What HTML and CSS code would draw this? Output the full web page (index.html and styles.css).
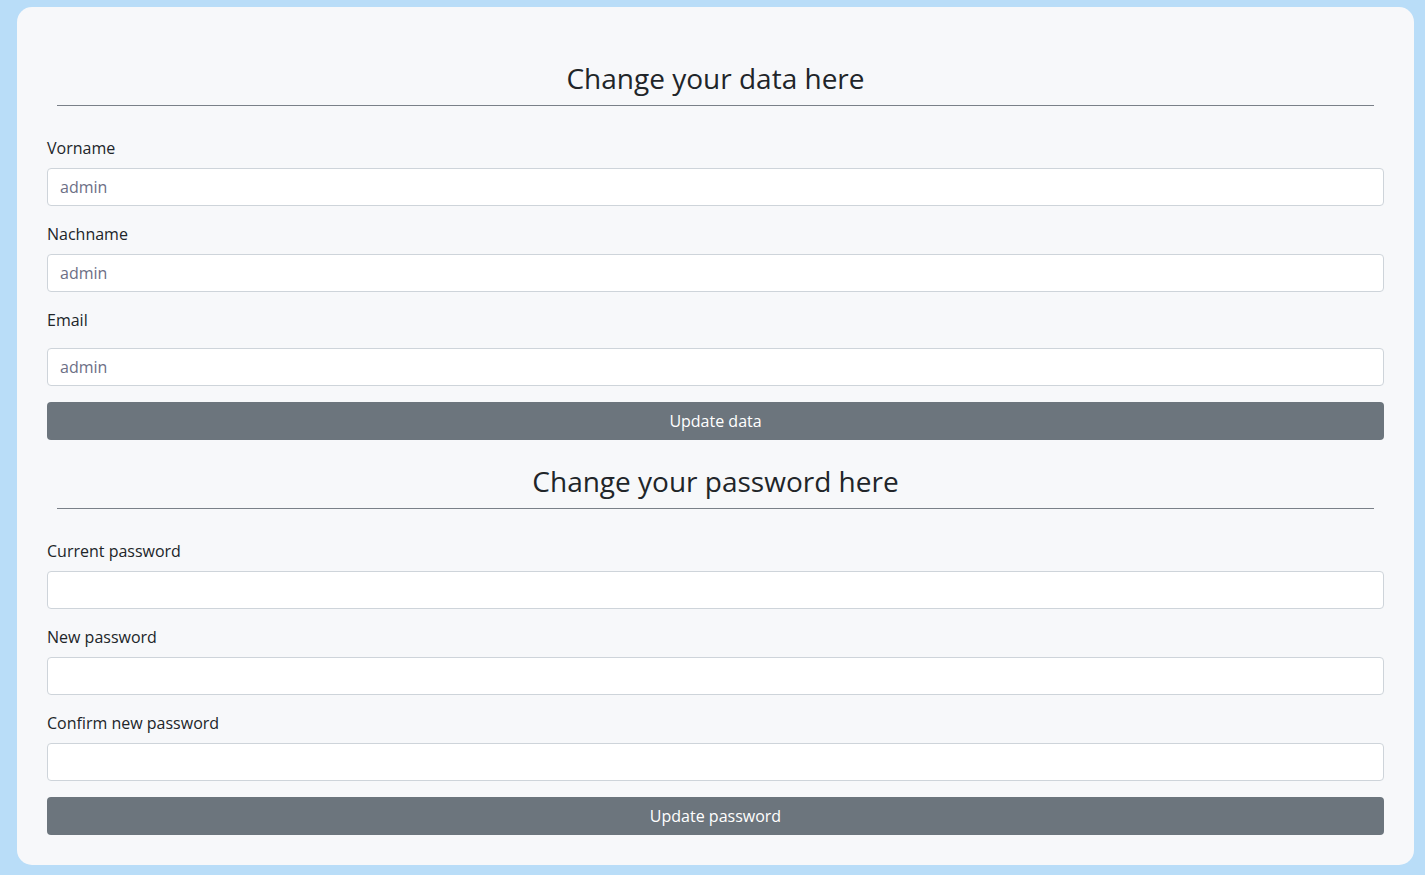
FILE: index.html
```html
<!DOCTYPE html>
<html lang="de">
<head>
<meta charset="utf-8">
<title>Profile</title>
<link rel="stylesheet" href="styles.css">
</head>
<body>
<main class="card">
  <form class="section">
    <h3 class="title">Change your data here</h3>
    <hr class="rule">
    <div class="group">
      <label class="label" for="vorname">Vorname</label>
      <input class="input" id="vorname" type="text" placeholder="admin">
    </div>
    <div class="group">
      <label class="label" for="nachname">Nachname</label>
      <input class="input" id="nachname" type="text" placeholder="admin">
    </div>
    <div class="group">
      <label class="label label-wide" for="email">Email</label>
      <input class="input" id="email" type="text" placeholder="admin">
    </div>
    <button class="btn" type="button">Update data</button>
  </form>
  <form class="section">
    <h3 class="title">Change your password here</h3>
    <hr class="rule">
    <div class="group">
      <label class="label" for="cur">Current password</label>
      <input class="input" id="cur" type="password">
    </div>
    <div class="group">
      <label class="label" for="new">New password</label>
      <input class="input" id="new" type="password">
    </div>
    <div class="group">
      <label class="label" for="conf">Confirm new password</label>
      <input class="input" id="conf" type="password">
    </div>
    <button class="btn" type="button">Update password</button>
  </form>
</main>
</body>
</html>
```

FILE: styles.css
```css
* { box-sizing: border-box; }
html, body { margin: 0; padding: 0; }
body {
  background: #b9ddf8;
  font-family: "Open Sans", "Liberation Sans", sans-serif;
  color: #212529;
  font-size: 16px;
  line-height: 1.5;
  padding: 7px 11px 10px 17px;
  min-height: 875px;
}
.card {
  background: #f7f8fa;
  border-radius: 15px;
  padding: 0 30px 30px;
  width: 1397px;
}
.section { display: flex; flex-direction: column; }
.title {
  margin: 54px 0 0;
  font-size: 28px;
  font-weight: 400;
  line-height: 34px;
  text-align: center;
  color: #212529;
}
.section + .section .title { margin-top: 24px; }
.rule {
  margin: 10px 10px 30px;
  border: 0;
  border-top: 1px solid #7a8088;
  height: 0;
}
.group { display: flex; flex-direction: column; margin-bottom: 16px; }
.label { margin-bottom: 8px; line-height: 24px; }
.label-wide { margin-bottom: 16px; }
.input {
  height: 38px;
  border: 1px solid #ced4da;
  border-radius: 4px;
  background: #fff;
  padding: 6px 12px;
  font-family: inherit;
  font-size: 16px;
  color: #495057;
}
.input::placeholder { color: #6c6f86; opacity: 1; }
.btn {
  height: 38px;
  border: 0;
  border-radius: 4px;
  background: #6c757d;
  color: #fff;
  font-family: inherit;
  font-size: 16px;
}
```
